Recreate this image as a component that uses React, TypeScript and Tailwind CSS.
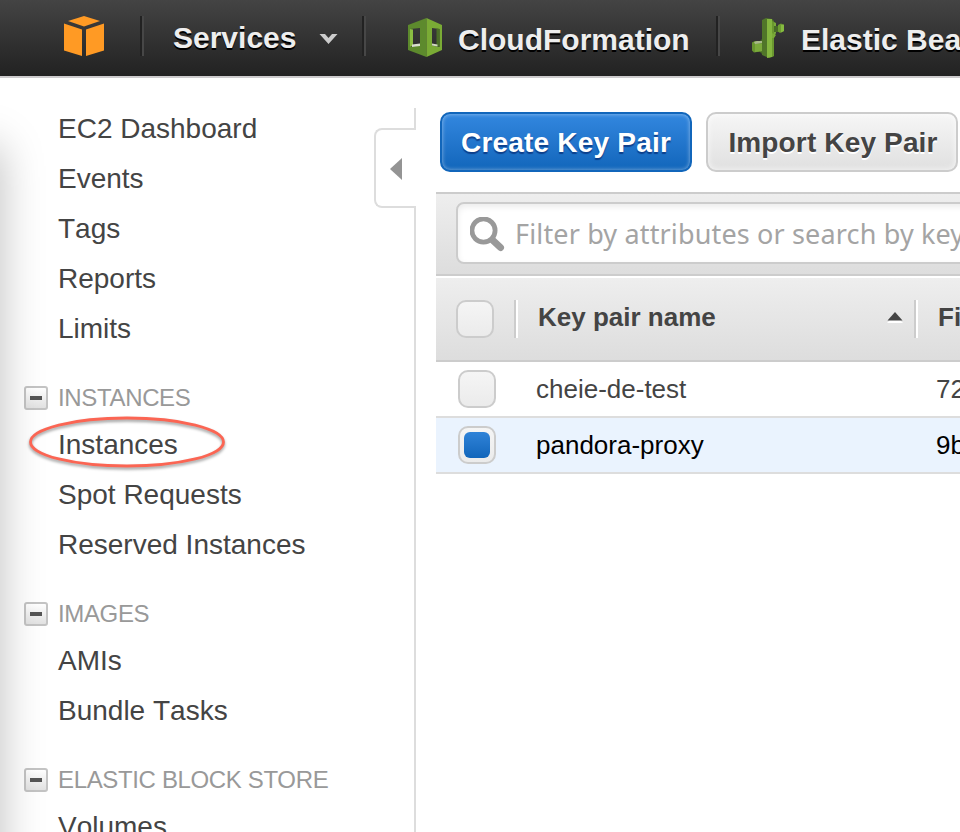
import React from "react";

const NAV_TEXT =
  "font-bold text-[30px] leading-[36px] text-[#eeeeee] whitespace-nowrap [text-shadow:0_2px_0_#000]";

function NavDivider() {
  return (
    <div className="mt-4 flex h-10 w-1 shrink-0">
      <div className="w-0.5 bg-[#222222]" />
      <div className="w-0.5 bg-[#474747]" />
    </div>
  );
}

function CubeLogo() {
  return (
    <svg className="mt-4 h-10 w-10 shrink-0" viewBox="0 0 40 40" fill="#ff9a24">
      <path d="M20 0 L36 5 L20 10.5 L4 5 Z" />
      <path d="M0 7.6 L18 13.6 V40 L0 34.6 Z" />
      <path d="M40 7.6 L22 13.6 V40 L40 34.6 Z" />
    </svg>
  );
}

function CloudFormationIcon() {
  return (
    <svg className="mt-[18px] h-[39px] w-[34px] shrink-0" viewBox="0 0 34 39">
      <path fillRule="evenodd" fill="#5d8a2d" d="M18.500 0 L0 7 V32 L18.500 39 Z M2 11 V29 L12 27.500 V10 Z" />
      <path d="M2 11 L5 11.500 V27.500 L2 29 Z" fill="#8abd42" />
      <path d="M4 26.500 L12 25.500 V28 L4 29 Z" fill="#d9e0cf" />
      <path fillRule="evenodd" fill="#7aab35" d="M18.500 0 L34 7 V32 L18.500 39 Z M24 10 V27.500 L31.500 29 V11 Z" />
      <path d="M28.500 10.500 L31.500 11 V29 L28.500 28 Z" fill="#4b6e27" />
      <path d="M24 25.500 L29.500 26.500 V28.500 L24 27.500 Z" fill="#d0dabf" />
    </svg>
  );
}

function BeanstalkIcon() {
  return (
    <svg className="mt-[18px] h-10 w-8 shrink-0" viewBox="0 0 32 40">
      <path d="M20 3 L24 5 V15 L22 19 H18 Z" fill="#79a93a" />
      <path d="M21 8 H27 V14 H21 Z" fill="#486b26" />
      <path d="M26 7 L29 5.500 L32 7 V13 L28 15 L26 13.500 Z" fill="#6d9c32" />
      <path d="M29 7 L32 6.500 V13 L29 14.500 Z" fill="#86bb40" />
      <path d="M8 23 L11 20 V37 L8 34 Z" fill="#466825" />
      <path d="M0 24.500 L3 23 H11 V33 L2 34.500 L0 32.500 Z" fill="#68952f" />
      <path d="M3 26 H11 V33 L3 34 Z" fill="#7baa3b" />
      <path d="M2 24 L5 23 H11 V25 L3 26 Z" fill="#a8b88a" />
      <path d="M10 2 L14 0 L20 1 L22 3 V38 L17 40 L10 37 Z" fill="#507629" />
      <path d="M15 1 H20 V39 L15 40 Z" fill="#84b63f" />
      <path d="M20 3 L22 4 V38 L20 39 Z" fill="#6a972f" />
      <path d="M20 15 L24 17 L22 20 H20 Z" fill="#79aa36" />
    </svg>
  );
}

function NavBar() {
  return (
    <header className="flex h-[78px] shrink-0 overflow-hidden border-b-2 border-[#cdcbcd] bg-gradient-to-b from-[#444444] to-[#222222]">
      <div className="flex w-[140px] shrink-0 pl-16">
        <CubeLogo />
      </div>
      <NavDivider />
      <div className="flex w-[218px] shrink-0 pl-[29px]">
        <span className={`mt-5 ${NAV_TEXT}`}>Services</span>
        <svg className="mt-[33px] ml-[23px] h-3 w-[19px]" viewBox="0 0 19 12">
          <path d="M0.500 1 H6 L9.500 5 L13 1 H18.500 L9.500 11 Z" fill="#cccccc" />
        </svg>
      </div>
      <NavDivider />
      <div className="flex w-[350px] shrink-0 pl-[42px]">
        <CloudFormationIcon />
        <span className={`mt-[22px] ml-4 ${NAV_TEXT}`}>CloudFormation</span>
      </div>
      <NavDivider />
      <div className="flex pl-8">
        <BeanstalkIcon />
        <span className={`mt-[22px] ml-[17px] ${NAV_TEXT}`}>Elastic Bea</span>
      </div>
    </header>
  );
}

function NavItem({ label, circled = false }: { label: string; circled?: boolean }) {
  return (
    <li className="relative h-[50px] pl-[58px] text-[28px] leading-[50px] whitespace-nowrap text-[#444444] [font-kerning:none]">
      {label}
      {circled && (
        <svg className="absolute top-[-6px] left-6 h-16 w-[210px] overflow-visible" viewBox="0 0 210 64">
          <ellipse
            cx="103"
            cy="28"
            rx="96.500"
            ry="24"
            fill="none"
            stroke="#fb6553"
            strokeWidth="2.800"
            className="[filter:drop-shadow(0_2px_1.5px_rgba(0,0,0,0.4))]"
          />
        </svg>
      )}
    </li>
  );
}

function GroupHeading({ label }: { label: string }) {
  return (
    <div className="mt-7 mb-1.5 flex h-8 items-center pl-6">
      <span className="flex h-6 w-6 items-center justify-center rounded-[3px] border-2 border-[#c4c4c4] bg-gradient-to-b from-white to-[#e2e2e2]">
        <span className="h-1 w-3 bg-[#555555]" />
      </span>
      <span className="ml-2.5 text-[24px] leading-[30px] tracking-[-0.35px] whitespace-nowrap text-[#999999]">
        {label}
      </span>
    </div>
  );
}

const GROUPS = [
  { heading: "INSTANCES", items: ["Instances", "Spot Requests", "Reserved Instances"] },
  { heading: "IMAGES", items: ["AMIs", "Bundle Tasks"] },
  { heading: "ELASTIC BLOCK STORE", items: ["Volumes"] },
];

function Sidebar() {
  return (
    <nav className="relative w-[374px] shrink-0 pt-[26px]">
      <div className="absolute top-[68px] -left-10 h-[900px] w-10 shadow-[0_0_44px_rgba(0,0,0,0.27)]" />
      <ul>
        {["EC2 Dashboard", "Events", "Tags", "Reports", "Limits"].map((label) => (
          <NavItem key={label} label={label} />
        ))}
      </ul>
      {GROUPS.map((group) => (
        <section key={group.heading} className="flex flex-col">
          <GroupHeading label={group.heading} />
          <ul>
            {group.items.map((label) => (
              <NavItem key={label} label={label} circled={label === "Instances"} />
            ))}
          </ul>
        </section>
      ))}
    </nav>
  );
}

function CollapseRail() {
  return (
    <div className="flex w-[42px] shrink-0 flex-col pt-[30px]">
      <div className="h-5 shrink-0 border-r-2 border-[#dddddd]" />
      <div className="flex h-20 shrink-0 items-center rounded-l-lg border-2 border-r-0 border-[#dddddd] pt-0.5 pl-3.5">
        <svg className="h-[22px] w-3" viewBox="0 0 12 22">
          <path d="M12 0 V22 L0 11 Z" fill="#949494" />
        </svg>
      </div>
      <div className="flex-1 border-r-2 border-[#dddddd]" />
    </div>
  );
}

function Checkbox({ checked = false }: { checked?: boolean }) {
  return (
    <span className="flex h-[38px] w-[38px] shrink-0 items-center justify-center rounded-[10px] border-2 border-[#cccccc] bg-gradient-to-b from-[#f5f5f5] to-[#ebebeb]">
      {checked && <span className="h-[26px] w-[26px] rounded-[6px] bg-gradient-to-b from-[#2f83d8] to-[#1166bb]" />}
    </span>
  );
}

function ColumnDivider() {
  return (
    <div className="flex h-[38px] w-1 shrink-0">
      <div className="w-0.5 bg-[#cccccc]" />
      <div className="w-0.5 bg-white" />
    </div>
  );
}

function KeyRow({ name, print, selected = false }: { name: string; print: string; selected?: boolean }) {
  return (
    <div
      className={`flex h-14 items-center border-b-2 border-[#dddddd] pl-[22px] text-[26px] leading-[54px] whitespace-nowrap ${
        selected ? "bg-[#eaf3fe] text-black" : "bg-white text-[#444444]"
      }`}
    >
      <Checkbox checked={selected} />
      <span className="ml-10 w-[400px] shrink-0">{name}</span>
      <span>{print}</span>
    </div>
  );
}

function KeyPairs() {
  return (
    <main className="ml-5 flex min-w-0 flex-1 flex-col overflow-hidden pt-[34px]">
      <div className="flex shrink-0 gap-3.5 pl-1">
        <button className="h-[60px] w-[252px] shrink-0 rounded-[10px] border-2 border-[#1166bb] bg-gradient-to-b from-[#3287df] to-[#1166bb] pt-px text-[28px] font-bold tracking-[0.2px] whitespace-nowrap text-white shadow-[inset_0_0_4px_rgba(255,255,255,0.5)] [text-shadow:0_2px_1px_rgba(0,30,100,0.6)]">
          Create Key Pair
        </button>
        <button className="h-[60px] w-[252px] shrink-0 rounded-[10px] border-2 border-[#cccccc] bg-gradient-to-b from-[#f6f6f6] to-[#e0e0e0] pt-px pl-0.5 text-[28px] font-bold tracking-[0.15px] whitespace-nowrap text-[#444444] shadow-[inset_0_0_6px_rgba(255,255,255,0.8)] [text-shadow:0_2px_0_#fff]">
          Import Key Pair
        </button>
      </div>
      <div className="mt-5 h-[84px] shrink-0 border-y-2 border-[#cccccc] bg-gradient-to-b from-[#eeeeee] to-[#dddddd] pt-2 pl-5">
        <div className="flex h-[62px] w-[600px] items-center rounded-lg border-2 border-[#cccccc] bg-white pl-3 shadow-[inset_0_3px_6px_rgba(0,0,0,0.08)]">
          <svg className="mt-1 h-9 w-9 shrink-0" viewBox="0 0 36 36" fill="none" stroke="#999999">
            <circle cx="13.500" cy="13.500" r="11.600" strokeWidth="4.800" />
            <path d="M23 23.500 L30.500 30.500" strokeWidth="7" strokeLinecap="round" />
          </svg>
          <span className="mt-0.5 ml-[9px] font-['Noto_Sans',sans-serif] text-[27px] tracking-[0.15px] whitespace-nowrap text-[#a4a4a4]">
            Filter by attributes or search by key
          </span>
        </div>
      </div>
      <div className="mt-0.5 flex h-[84px] shrink-0 items-center border-b-2 border-[#cccccc] bg-gradient-to-b from-[#eeeeee] to-[#dddddd] pl-5 text-[26px] font-bold whitespace-nowrap text-[#444444]">
        <Checkbox />
        <div className="ml-5">
          <ColumnDivider />
        </div>
        <span className="-mt-1 ml-5 w-[349px] shrink-0">Key pair name</span>
        <svg className="-mt-1 h-[11px] w-4 shrink-0" viewBox="0 0 16 11">
          <path d="M8 3 L16 11 H0 Z" fill="#ffffff" />
          <path d="M8 0 L15.500 8.500 H0.500 Z" fill="#444444" />
        </svg>
        <div className="ml-[11px]">
          <ColumnDivider />
        </div>
        <span className="-mt-1 ml-5">Fi</span>
      </div>
      <KeyRow name="cheie-de-test" print="72" />
      <KeyRow name="pandora-proxy" print="9b" selected />
    </main>
  );
}

export default function App() {
  return (
    <div className="flex h-[832px] w-[960px] flex-col overflow-hidden bg-white font-['Liberation_Sans',Arial,sans-serif]">
      <NavBar />
      <div className="flex min-h-0 flex-1">
        <Sidebar />
        <CollapseRail />
        <KeyPairs />
      </div>
    </div>
  );
}
